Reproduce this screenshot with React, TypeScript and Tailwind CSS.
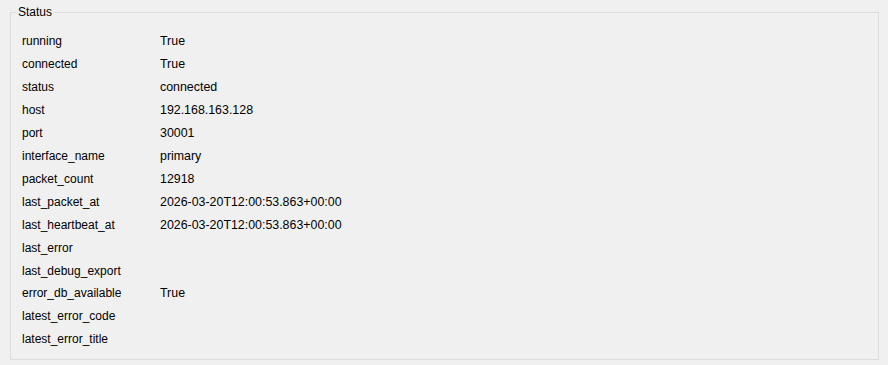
const rows: [string, string][] = [
  ["running", "True"],
  ["connected", "True"],
  ["status", "connected"],
  ["host", "192.168.163.128"],
  ["port", "30001"],
  ["interface_name", "primary"],
  ["packet_count", "12918"],
  ["last_packet_at", "2026-03-20T12:00:53.863+00:00"],
  ["last_heartbeat_at", "2026-03-20T12:00:53.863+00:00"],
  ["last_error", ""],
  ["last_debug_export", ""],
  ["error_db_available", "True"],
  ["latest_error_code", ""],
  ["latest_error_title", ""],
];

export default function App() {
  return (
    <div
      className="h-[365px] w-[888px] bg-[#f0f0f0] pl-[10px] pt-[4px] text-[12px] text-black"
      style={{ fontFamily: '"Segoe UI", "Liberation Sans", Arial, sans-serif' }}
    >
      <fieldset className="m-0 h-[356px] w-[869px] border border-[#dcdcdc] px-[11px] pb-0 pt-[10px]">
        <legend className="-ml-[6px] px-[2px] leading-[16px]">Status</legend>
        <div className="flex flex-col">
          {rows.map(([k, v]) => (
            <div key={k} className="flex h-[22.92px] items-center leading-[16px]">
              <span className="w-[138px] shrink-0">{k}</span>
              <span className="text-[12.4px]">{v}</span>
            </div>
          ))}
        </div>
      </fieldset>
    </div>
  );
}
